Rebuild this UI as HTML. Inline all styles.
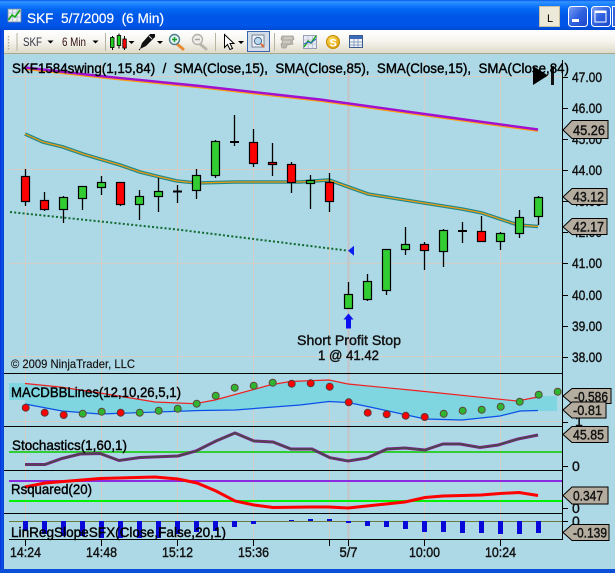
<!DOCTYPE html>
<html><head><meta charset="utf-8"><style>
html,body{margin:0;padding:0;background:#add8e6;width:615px;height:573px;overflow:hidden}
svg{position:absolute;left:0;top:0;display:block}
text{font-family:"Liberation Sans",Arial,sans-serif}
.l{font-size:14px;fill:#000;stroke:#000;stroke-width:.4}
.a{font-size:14px;fill:#111;stroke:#111;stroke-width:.4}
.t{fill:#b4ad9f;stroke:#000;stroke-width:1}
.g{fill:#32cd32;stroke:#000;stroke-width:1.2}
.r{fill:#f00;stroke:#000;stroke-width:1.2}
.dg{fill:#2fb52f;stroke:#5a4a3a;stroke-width:1}
.dr{fill:#f00;stroke:#5a3a3a;stroke-width:1}
</style></head><body>
<svg width="615" height="573" viewBox="0 0 615 573" xmlns="http://www.w3.org/2000/svg">
<defs>
<linearGradient id="tb" x1="0" y1="0" x2="0" y2="1">
<stop offset="0" stop-color="#0058ee"/><stop offset=".06" stop-color="#3593ff"/><stop offset=".14" stop-color="#1c84ff"/><stop offset=".3" stop-color="#0268f4"/><stop offset=".55" stop-color="#0056e6"/><stop offset=".85" stop-color="#0055ea"/><stop offset="1" stop-color="#0049d0"/>
</linearGradient>
<linearGradient id="tl" x1="0" y1="0" x2="0" y2="1">
<stop offset="0" stop-color="#fff"/><stop offset=".45" stop-color="#f6f5ef"/><stop offset="1" stop-color="#dcd8c6"/>
</linearGradient>
<linearGradient id="bt" x1="0" y1="0" x2="1" y2="1">
<stop offset="0" stop-color="#7ea0f5"/><stop offset=".5" stop-color="#2f62e0"/><stop offset="1" stop-color="#1c45c8"/>
</linearGradient>
<linearGradient id="lf" x1="0" y1="0" x2="1" y2="0">
<stop offset="0" stop-color="#0831d9"/><stop offset=".5" stop-color="#0a50e8"/><stop offset="1" stop-color="#0043cf"/>
</linearGradient>
<radialGradient id="coin" cx=".4" cy=".35" r=".7"><stop offset="0" stop-color="#ffe36a"/><stop offset="1" stop-color="#d99a00"/></radialGradient>
</defs>

<!-- window frame -->
<rect x="0" y="0" width="615" height="30" fill="url(#tb)"/>
<rect x="0" y="30" width="4" height="543" fill="url(#lf)"/>
<rect x="0" y="569" width="615" height="4" fill="#0a4fd8"/>
<rect x="4" y="54" width="611" height="515" fill="#add8e6"/>

<!-- title icon -->
<rect x="8" y="9" width="13" height="13" fill="#e8eef4" stroke="#7a8aa0" stroke-width=".8"/>
<path d="M8 13h13M8 17h13M12.5 9v13M17 9v13" stroke="#9aa6b8" stroke-width=".6"/>
<path d="M8.5 20l3.5-5 3 2 5-7" stroke="#18a818" stroke-width="1.6" fill="none"/>
<text x="27" y="23" font-size="14" fill="#fff" stroke="#fff" stroke-width=".2" xml:space="preserve" textLength="137" lengthAdjust="spacingAndGlyphs">SKF  5/7/2009  (6 Min)</text>

<!-- title buttons -->
<rect x="539.500" y="6.500" width="20" height="20" fill="#ece9d8" stroke="#c8bfa0"/>
<text x="547" y="22" font-size="11" fill="#000">L</text>
<rect x="568.500" y="6.500" width="19" height="20" rx="3" fill="url(#bt)" stroke="#fff"/>
<rect x="572" y="19" width="7" height="3" fill="#fff"/>
<rect x="591.500" y="6.500" width="19" height="20" rx="3" fill="url(#bt)" stroke="#fff"/>
<rect x="595" y="11" width="11" height="11" fill="none" stroke="#fff"/><rect x="595" y="11" width="11" height="2" fill="#fff"/>
<rect x="612" y="6" width="3" height="21" fill="#fff"/>
<rect x="613" y="7" width="2" height="19" fill="#3a62d8"/>

<!-- toolbar -->
<rect x="4" y="30" width="611" height="24" fill="url(#tl)"/>
<rect x="4" y="53" width="611" height="1" fill="#a9a888"/>
<path d="M8.500 36v14" stroke="#b0ac98" stroke-dasharray="1.500 1.500" stroke-width="1.400"/>
<path d="M17 33v18M105.500 33v18M215.500 33v18M274.500 33v18" stroke="#b8b4a2" stroke-width="1"/>
<text x="23" y="46" font-size="12" fill="#334" textLength="19" lengthAdjust="spacingAndGlyphs">SKF</text>
<path d="M47.500 40.500h6l-3 3z" fill="#000"/>
<text x="62" y="46" font-size="12" fill="#311" textLength="24" lengthAdjust="spacingAndGlyphs">6 Min</text>
<path d="M92.500 40.500h6l-3 3z" fill="#000"/>
<!-- candle icon -->
<path d="M112.500 36v14M119 33.500v15M124.500 36v14" stroke="#000"/>
<rect x="110.500" y="37.500" width="3.500" height="10" fill="#1fd01f" stroke="#000" stroke-width=".8"/>
<rect x="117.200" y="35.500" width="3.500" height="10" fill="#1fd01f" stroke="#000" stroke-width=".8"/>
<rect x="122.800" y="39" width="3.500" height="9" fill="#f00" stroke="#000" stroke-width=".8"/>
<path d="M128.500 41h6l-3 3z" fill="#000"/>
<!-- pen icon -->
<path d="M140 49l2-6 8-9 5 0 0 3-9 9z" fill="#111"/><path d="M149 36l3 3" stroke="#ddd" stroke-width="1"/><path d="M140 49l-1 1" stroke="#000"/>
<path d="M157 41h6l-3 3z" fill="#000"/>
<!-- zoom in -->
<path d="M177 44l6 5" stroke="#e88a30" stroke-width="3" stroke-linecap="round"/>
<circle cx="174.500" cy="39.500" r="5" fill="#e5f4ee" stroke="#4e7f90" stroke-width="1.400"/>
<path d="M172 39.500h5M174.500 37v5" stroke="#129a30" stroke-width="1.500"/>
<!-- zoom out disabled -->
<path d="M200 44l6 5" stroke="#b8b6ae" stroke-width="3" stroke-linecap="round"/>
<circle cx="197.500" cy="39.500" r="5" fill="#efeeea" stroke="#b4b2aa" stroke-width="1.400"/>
<path d="M195 39.500h5" stroke="#a8a6a0" stroke-width="1.500"/>
<!-- cursor -->
<path d="M224.500 34.500v13l3-3 2.500 5 2.500-1-2.500-5h4z" fill="#fff" stroke="#000" stroke-width="1"/>
<path d="M238 41h6l-3 3z" fill="#000"/>
<!-- active button -->
<rect x="247.500" y="31.500" width="22" height="20" fill="#d2dde8" stroke="#3a66b0"/>
<rect x="252" y="35" width="12" height="12" fill="#eef2f6" stroke="#5a6e88" stroke-width=".8"/>
<circle cx="258" cy="41" r="3.600" fill="#b8d8ee" stroke="#4a6a90"/>
<path d="M261 44l3 3" stroke="#e06a30" stroke-width="2"/>
<!-- gray icon -->
<path d="M282 36h11l1 3-2 2 1 3-6 1-1 3h-4l-1-4 2-2-2-3z" fill="#b9b7ae" stroke="#a09e96" stroke-width=".8"/>
<path d="M284 38h8M283 42h7" stroke="#dedcd4" stroke-width="1"/>
<!-- chart icon -->
<rect x="303.500" y="35.500" width="13" height="13" fill="#e8ecf4" stroke="#8088a8" stroke-width=".8"/>
<path d="M303.500 40h13M303.500 44h13M308 35.500v13M312.500 35.500v13" stroke="#a8b0c4" stroke-width=".6"/>
<path d="M304 47l4-6 3 2 5-7" stroke="#18a818" stroke-width="1.500" fill="none"/>
<path d="M304 44l4-2 3 1 5-4" stroke="#3060d0" stroke-width="1" fill="none"/>
<!-- coin -->
<circle cx="333" cy="42" r="6.500" fill="url(#coin)" stroke="#c88a00"/>
<text x="329.500" y="46.500" font-size="11" font-weight="bold" fill="#fff">S</text>
<!-- table -->
<rect x="349.500" y="35.500" width="13" height="12" fill="#f2f4f8" stroke="#3a5a90"/>
<rect x="350" y="36" width="12" height="3" fill="#3a6ab8"/>
<path d="M350 42h12M350 45h12M354 39v8M358 39v8" stroke="#7088b0" stroke-width=".7"/>

<!-- grid -->
<g stroke="#d3cfc6" stroke-width="1">
<path d="M9 76.500H562M9 169.500H562M9 263.500H562M9 356.500H562M9 421.500H562"/>
<path d="M25.500 60V540M101.500 60V540M177.500 60V540M253.500 60V540M329.500 60V540M424.500 60V540M500.500 60V540"/>
</g>
<rect x="347.500" y="60" width="2" height="480" fill="#c6c2c6"/>

<!-- SMA lines -->
<polyline points="25,68.800 100,77.300 200,87.300 320,100.800 450,118.800 538,130.800" fill="none" stroke="#ff9a10" stroke-width="2.200"/>
<polyline points="25,67.500 100,76 200,86 320,99.500 450,117.500 538,129.500" fill="none" stroke="#a010d0" stroke-width="2.400"/>
<polyline points="25,134 43,142 63,147 83,154 103,160 120,165 140,172 160,177 177,181 197,183 235,182 300,182 329,180 368,194 405,200 462,209 482,213 518,225 538,226.500" fill="none" stroke="#1f8a8c" stroke-width="3.600"/>
<polyline points="25,134 43,142 63,147 83,154 103,160 120,165 140,172 160,177 177,181 197,183 235,182 300,182 329,180 368,194 405,200 462,209 482,213 518,225 538,226.500" fill="none" stroke="#f09a10" stroke-width="1.200"/>
<!-- dotted trend -->
<polyline points="10,212 177,229.500 348,250.700" fill="none" stroke="#0f6a30" stroke-width="2" stroke-dasharray="2 2.200"/>
<path d="M348 250.700l6-5v10z" fill="#0a20f0"/>

<!-- wicks -->
<path stroke="#000" stroke-width="1.300" fill="none" d="M25.500 169V206M44.500 192V211M63.500 196V223M82.500 186V210M101.500 176V195M120.500 182V206M139.500 190V220M158.500 178V212M177.500 185V203M196.500 169V199M215.500 140V178M234.500 115V146M253.500 129V167M272.500 143V176M291.500 162V193M310.500 175V209M329.500 173V212M348.500 282V308M367.500 274V301M386.500 249V295M405.500 227V255M424.500 242V270M443.500 229V267M462.500 222V243M481.500 216V242M500.500 232V250M519.500 210V238M538.500 196V225"/>
<path stroke="#000" stroke-width="2" d="M173 191.500h9M230 142h9M458 231h9"/>
<!-- bodies -->
<g>
<rect class="r" x="21.500" y="176.500" width="8" height="25"/>
<rect class="r" x="40.500" y="200.500" width="8" height="9"/>
<rect class="g" x="59.500" y="197.500" width="8" height="12"/>
<rect class="g" x="78.500" y="186.500" width="8" height="12"/>
<rect class="g" x="97.500" y="182.500" width="8" height="5"/>
<rect class="r" x="116.500" y="182.500" width="8" height="22"/>
<rect class="g" x="135.500" y="196.500" width="8" height="8"/>
<rect class="g" x="154.500" y="191.500" width="8" height="5"/>
<rect class="g" x="192.500" y="175.500" width="8" height="15"/>
<rect class="g" x="211.500" y="141.500" width="8" height="34"/>
<rect class="r" x="249.500" y="142.500" width="8" height="21"/>
<rect class="r" x="268.500" y="162.500" width="8" height="2"/>
<rect class="r" x="287.500" y="164.500" width="8" height="18"/>
<rect class="g" x="306.500" y="180.500" width="8" height="3"/>
<rect class="r" x="325.500" y="182.500" width="8" height="19"/>
<rect class="g" x="344.500" y="294.500" width="8" height="14"/>
<rect class="g" x="363.500" y="281.500" width="8" height="18"/>
<rect class="g" x="382.500" y="249.500" width="8" height="41"/>
<rect class="g" x="401.500" y="244.500" width="8" height="5"/>
<rect class="r" x="420.500" y="244.500" width="8" height="6"/>
<rect class="g" x="439.500" y="230.500" width="8" height="21"/>
<rect class="r" x="477.500" y="231.500" width="8" height="10"/>
<rect class="g" x="496.500" y="233.500" width="8" height="8"/>
<rect class="g" x="515.500" y="217.500" width="8" height="16"/>
<rect class="g" x="534.500" y="197.500" width="8" height="19"/>
</g>

<!-- arrow + trade text -->
<path d="M348.500 313.500l5 6h-2.500v9h-5v-9h-2.500z" fill="#0a10f0"/>
<text class="a" x="297" y="345" textLength="104" lengthAdjust="spacingAndGlyphs">Short Profit Stop</text>
<text class="a" x="318" y="360" textLength="61" lengthAdjust="spacingAndGlyphs">1 @ 41.42</text>
<text x="11" y="368" font-size="12" fill="#111" stroke="#111" stroke-width=".15" textLength="124" lengthAdjust="spacingAndGlyphs">© 2009 NinjaTrader, LLC</text>

<!-- MACD -->
<path d="M9 383H25L60 387 100 393 155 402 195 403.700 215 400 270 385 290 381.500 329 380 348 384 420 391 517 401 538 396 557 396V411H538L520 411 500 416 462 420 425 419 370 407 348 402.500 329 401.500 300 405 235 410 200 410.500 100 414 62 411 25 404 25 400H9z" fill="#7fd5e0"/>
<polyline points="25,383.500 60,387 100,393 155,402 195,403.700 215,400 270,385 290,381.500 329,380 348,384 420,391 517,401 538,397" fill="none" stroke="#f02020" stroke-width="1.200"/>
<polyline points="25,404 62,411 100,414 200,410.500 235,410 300,405 329,401.500 348,402.500 370,407 425,419 462,420 500,416 520,411 538,410.500" fill="none" stroke="#0a50e8" stroke-width="1.200"/>
<g>
<circle class="dr" cx="25.700" cy="407.700" r="3.500"/><circle class="dr" cx="44.700" cy="412.700" r="3.500"/><circle class="dr" cx="63.700" cy="415" r="3.500"/>
<circle class="dg" cx="82.700" cy="413.700" r="3.500"/><circle class="dg" cx="101.700" cy="411.700" r="3.500"/><circle class="dr" cx="120.700" cy="412.700" r="3.500"/>
<circle class="dg" cx="139.700" cy="412.700" r="3.500"/><circle class="dg" cx="158.700" cy="410.700" r="3.500"/><circle class="dg" cx="177.700" cy="408.700" r="3.500"/>
<circle class="dg" cx="196.700" cy="403.700" r="3.500"/><circle class="dg" cx="215.700" cy="395.700" r="3.500"/><circle class="dg" cx="234.700" cy="387.700" r="3.500"/>
<circle class="dg" cx="253.700" cy="385.700" r="3.500"/><circle class="dg" cx="272.700" cy="382.700" r="3.500"/><circle class="dr" cx="291.700" cy="383.700" r="3.500"/>
<circle class="dr" cx="310.700" cy="383.300" r="3.500"/><circle class="dr" cx="329.700" cy="386.700" r="3.500"/><circle class="dr" cx="348.700" cy="402.300" r="3.500"/>
<circle class="dr" cx="367.700" cy="412.700" r="3.500"/><circle class="dr" cx="386.700" cy="414.300" r="3.500"/><circle class="dr" cx="405.700" cy="415.700" r="3.500"/>
<circle class="dr" cx="424.700" cy="417" r="3.500"/><circle class="dg" cx="443.700" cy="413.700" r="3.500"/><circle class="dg" cx="462.700" cy="410.700" r="3.500"/>
<circle class="dg" cx="481.700" cy="409.700" r="3.500"/><circle class="dg" cx="500.700" cy="406.700" r="3.500"/><circle class="dg" cx="519.700" cy="401.700" r="3.500"/>
<circle class="dg" cx="538.700" cy="394.700" r="3.500"/><circle class="dg" cx="557.700" cy="391.700" r="3.500"/>
</g>

<!-- Stochastics -->
<path d="M9 452H562" stroke="#32cd32" stroke-width="2"/>
<polyline points="25,464.500 45,464.500 62,458.500 80,454 100,453.500 119,460.500 140,457.500 178,456 196,451 216,441 235,433 254,441 273,442 291,449 312,449 330,457.700 348,461 367,458 387,449 405,448 425,450 443,444 460,444 480,447.500 498,445 518,439 538,435" fill="none" stroke="#8a1a96" stroke-width="3"/>
<polyline points="25,464.500 45,464.500 62,458.500 80,454 100,453.500 119,460.500 140,457.500 178,456 196,451 216,441 235,433 254,441 273,442 291,449 312,449 330,457.700 348,461 367,458 387,449 405,448 425,450 443,444 460,444 480,447.500 498,445 518,439 538,435" fill="none" stroke="#484848" stroke-width="1.800"/>

<!-- Rsquared -->
<path d="M9 481H562" stroke="#8a2be2" stroke-width="2"/>
<path d="M9 501H562" stroke="#00f000" stroke-width="2"/>
<polyline points="25,487 45,483 70,481 100,478.500 155,477 178,479 197,483 216,491 235,501 254,505 273,507.500 310,507 329,507 348,508 367,506 405,502 425,497.500 443,496 481,495 500,493.500 519,492.500 538,495.500" fill="none" stroke="#f00" stroke-width="3"/>

<!-- LinReg -->
<path d="M9 521.500H562" stroke="#6a7a3a" stroke-width="1"/>
<g fill="#0808d8">
<rect x="23" y="521" width="5" height="10"/><rect x="42" y="521" width="5" height="13"/><rect x="61" y="521" width="5" height="15"/><rect x="80" y="521" width="5" height="15"/>
<rect x="99" y="521" width="5" height="17"/><rect x="118" y="521" width="5" height="17"/><rect x="137" y="521" width="5" height="17"/><rect x="156" y="521" width="5" height="17"/>
<rect x="175" y="521" width="5" height="13"/><rect x="194" y="521" width="5" height="11"/><rect x="213" y="521" width="5" height="10"/><rect x="232" y="521" width="5" height="6"/>
<rect x="251" y="521" width="5" height="3"/><rect x="289" y="520" width="5" height="1"/><rect x="308" y="519" width="5" height="2"/><rect x="327" y="519" width="5" height="2"/>
<rect x="346" y="521" width="5" height="2"/><rect x="365" y="521" width="5" height="5"/><rect x="384" y="521" width="5" height="6"/><rect x="403" y="521" width="5" height="8"/>
<rect x="422" y="521" width="5" height="11"/><rect x="441" y="521" width="5" height="11"/><rect x="460" y="521" width="5" height="12"/><rect x="479" y="521" width="5" height="12"/>
<rect x="498" y="521" width="5" height="13"/><rect x="517" y="521" width="5" height="13"/><rect x="536" y="521" width="5" height="12"/>
</g>

<!-- panel separators, axes -->
<path stroke="#000" stroke-width="1" d="M4 373.500H562M4 426.500H562M4 470.500H562M4 513.500H562M9 539.500H562"/>
<path stroke="#000" stroke-width="1" d="M562.500 60V540"/>
<path stroke="#000" stroke-width="1" d="M562 77.500h6M562 108.500h6M562 139.500h6M562 170.500h6M562 201.500h6M562 232.500h6M562 263.500h6M562 295.500h6M562 326.500h6M562 357.500h6M562 422.500h6M562 466.500h6M562 508.500h6M562 521.500h6"/>
<path stroke="#000" stroke-width="1" d="M25.500 540v6M101.500 540v6M177.500 540v6M253.500 540v6M329.500 540v6M348.500 540v6M424.500 540v6M500.500 540v6"/>

<!-- end marker -->
<path d="M533 66l15 9.500-15 9.500z" fill="#000"/><rect x="551" y="66" width="3" height="19" fill="#111"/>

<!-- header + labels -->
<text class="l" x="12" y="73" xml:space="preserve" textLength="557" lengthAdjust="spacingAndGlyphs">SKF1584swing(1,15,84)  /  SMA(Close,15),  SMA(Close,85),  SMA(Close,15),  SMA(Close,84)</text>
<text class="l" x="11" y="397" textLength="170" lengthAdjust="spacingAndGlyphs">MACDBBLines(12,10,26,5,1)</text>
<text class="l" x="12" y="450" textLength="115" lengthAdjust="spacingAndGlyphs">Stochastics(1,60,1)</text>
<text class="l" x="11" y="494" textLength="81" lengthAdjust="spacingAndGlyphs">Rsquared(20)</text>
<text class="l" x="11" y="537" textLength="215" lengthAdjust="spacingAndGlyphs">LinRegSlopeSFX(Close,False,20,1)</text>

<!-- axis labels -->
<g>
<text class="a" x="572" y="82" textLength="30" lengthAdjust="spacingAndGlyphs">47.00</text>
<text class="a" x="572" y="113" textLength="30" lengthAdjust="spacingAndGlyphs">46.00</text>
<text class="a" x="572" y="144" textLength="30" lengthAdjust="spacingAndGlyphs">45.00</text>
<text class="a" x="572" y="175" textLength="30" lengthAdjust="spacingAndGlyphs">44.00</text>
<text class="a" x="572" y="206" textLength="30" lengthAdjust="spacingAndGlyphs">43.00</text>
<text class="a" x="572" y="237" textLength="30" lengthAdjust="spacingAndGlyphs">42.00</text>
<text class="a" x="572" y="268" textLength="30" lengthAdjust="spacingAndGlyphs">41.00</text>
<text class="a" x="572" y="300" textLength="30" lengthAdjust="spacingAndGlyphs">40.00</text>
<text class="a" x="572" y="331" textLength="30" lengthAdjust="spacingAndGlyphs">39.00</text>
<text class="a" x="572" y="362" textLength="30" lengthAdjust="spacingAndGlyphs">38.00</text>
<text class="a" x="575" y="426">1</text>
<text class="a" x="572" y="471">0</text>
<text class="a" x="572" y="513">0</text>
<text class="a" x="572" y="526">0</text>
</g>
<text class="a" x="10" y="557" textLength="31" lengthAdjust="spacingAndGlyphs">14:24</text>
<text class="a" x="86" y="557" textLength="31" lengthAdjust="spacingAndGlyphs">14:48</text>
<text class="a" x="162" y="557" textLength="31" lengthAdjust="spacingAndGlyphs">15:12</text>
<text class="a" x="238" y="557" textLength="31" lengthAdjust="spacingAndGlyphs">15:36</text>
<text class="a" x="339.500" y="557" textLength="18" lengthAdjust="spacingAndGlyphs">5/7</text>
<text class="a" x="409" y="557" textLength="31" lengthAdjust="spacingAndGlyphs">10:00</text>
<text class="a" x="485" y="557" textLength="31" lengthAdjust="spacingAndGlyphs">10:24</text>

<!-- tags -->
<path class="t" d="M563 130l9-9.500h36v18h-36z" />
<text class="a" x="573" y="135" textLength="32" lengthAdjust="spacingAndGlyphs">45.26</text>
<path class="t" d="M563 197l9-8.500h35v16h-35z"/>
<text class="a" x="573" y="201.500" textLength="31" lengthAdjust="spacingAndGlyphs">43.12</text>
<path class="t" d="M563 227l9-8.500h35v16h-35z"/>
<text class="a" x="573" y="231.500" textLength="31" lengthAdjust="spacingAndGlyphs">42.17</text>
<path class="t" d="M563 396l9-7.500h39v15h-39z"/>
<text class="a" x="574" y="401.500" textLength="34" lengthAdjust="spacingAndGlyphs">-0.586</text>
<path class="t" d="M563 410l9-8h34v16h-34z"/>
<text class="a" x="573" y="415" textLength="29" lengthAdjust="spacingAndGlyphs">-0.81</text>
<path class="t" d="M563 434.500l9-8h36v16h-36z"/>
<text class="a" x="573" y="439.500" textLength="31" lengthAdjust="spacingAndGlyphs">45.85</text>
<path class="t" d="M563 495.500l9-8.500h36v17h-36z"/>
<text class="a" x="573" y="500.500" textLength="30" lengthAdjust="spacingAndGlyphs">0.347</text>
<path class="t" d="M563 532.500l9-8h37v16h-37z"/>
<text class="a" x="573" y="537.500" textLength="34" lengthAdjust="spacingAndGlyphs">-0.139</text>
</svg>
</body></html>
